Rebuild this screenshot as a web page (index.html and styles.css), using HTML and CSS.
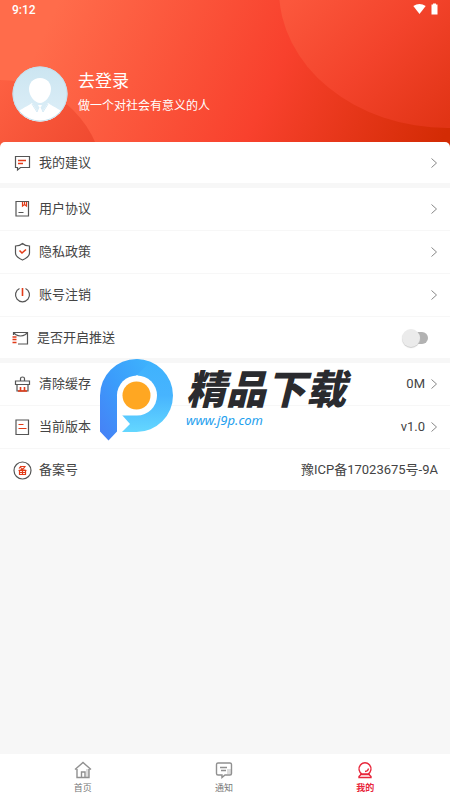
FILE: index.html
```html
<!DOCTYPE html>
<html lang="zh-CN">
<head>
<meta charset="utf-8">
<meta name="viewport" content="width=device-width, initial-scale=1">
<title>我的</title>
<link rel="stylesheet" href="styles.css">
</head>
<body>
<div class="app">
  <header class="hero">
    <svg class="hero-art" viewBox="0 0 450 147" preserveAspectRatio="none" aria-hidden="true">
      <defs>
        <linearGradient id="base" gradientUnits="userSpaceOnUse" x1="50" y1="20" x2="420" y2="190">
          <stop offset="0" stop-color="#ff6c4b"/><stop offset=".56" stop-color="#f8412d"/><stop offset="1" stop-color="#d32b04"/>
        </linearGradient>
        <linearGradient id="big" gradientUnits="userSpaceOnUse" x1="290" y1="0" x2="430" y2="140">
          <stop offset="0" stop-color="#fb573c"/><stop offset=".5" stop-color="#f3432b"/><stop offset="1" stop-color="#e13415"/>
        </linearGradient>
        <linearGradient id="small" gradientUnits="userSpaceOnUse" x1="0" y1="80" x2="90" y2="147">
          <stop offset="0" stop-color="#fd6042"/><stop offset="1" stop-color="#f04a30"/>
        </linearGradient>
      </defs>
      <path d="M0 0h450v147H0z" fill="url(#base)"/>
      <ellipse cx="448" cy="-10" rx="169" ry="138" fill="url(#big)"/>
      <circle cx="0" cy="184" r="104" fill="url(#small)"/>
    </svg>
    <div class="status">
      <span class="time">9:12</span>
      <span class="status-icons">
        <svg width="13" height="12" viewBox="0 0 13 12"><path d="M0.300 3Q6.500-1 12.700 3L6.500 11z" fill="#fff"/></svg>
        <svg width="7" height="12" viewBox="0 0 7 12"><path d="M2 0.500h3V1.500h1.500V11.500H.5V1.500H2z" fill="#fff"/></svg>
      </span>
    </div>
    <div class="profile">
      <svg class="avatar" viewBox="0 0 56 56" aria-hidden="true">
        <defs><clipPath id="face"><circle cx="28" cy="28" r="27.500"/></clipPath>
        <linearGradient id="sky" x1="0" y1="0" x2="0" y2="1"><stop offset="0" stop-color="#cbe5f1"/><stop offset="1" stop-color="#deeff8"/></linearGradient></defs>
        <g clip-path="url(#face)">
          <path d="M0 0h56v56H0z" fill="url(#sky)"/>
          <path d="M28 12c7 0 11 5 11 11 0 7-6 14-11 14s-11-7-11-14c0-6 4-11 11-11z" fill="#fff"/>
          <path d="M4 56V48c2-4 9-6 16-11l5 8 2-4-1-2h4l-1 2 2 4 5-8c7 5 14 7 16 11v8z" fill="#fff"/>
          <path d="M20 38l5 8 2-5M36 38l-5 8-2-5" fill="none" stroke="#d5eaf5" stroke-width="1"/>
        </g>
        <circle cx="28" cy="28" r="27" fill="none" stroke="#c3e0ee" stroke-width="1"/>
      </svg>
      <div>
        <a class="login" href="#">去登录</a>
        <p class="motto">做一个对社会有意义的人</p>
      </div>
    </div>
  </header>

  <main class="list">
    <section class="group">
      <a class="row" href="#">
        <svg class="icon" viewBox="0 0 20 20"><path d="M3.500 3.500h14v11h-9l-3 2.500v-2.500h-2z"/><path class="red" d="M6 7.500h8M6 10.500h5"/></svg>
        <span class="label">我的建议</span><svg class="arrow" viewBox="0 0 8 12"><path d="M1.500 1.500L6.500 6l-5 4.500"/></svg>
      </a>
    </section>
    <section class="group">
      <a class="row" href="#">
        <svg class="icon" viewBox="0 0 20 20"><path d="M4 2.500h12.500v14.500H4zM6.500 13.500h5"/><path class="red thin" d="M10.500 3v4l2-1.500 2 1.500V3M12.500 3v3"/></svg>
        <span class="label">用户协议</span><svg class="arrow" viewBox="0 0 8 12"><path d="M1.500 1.500L6.500 6l-5 4.500"/></svg>
      </a>
      <a class="row" href="#">
        <svg class="icon" viewBox="0 0 20 20"><path d="M10.500 1.500Q13 4 17.500 4v7q0 4-7 7-7-3-7-7V4Q8 4 10.500 1.500z"/><path class="red" d="M7.500 8.500l2.500 2.500 4-3.500"/></svg>
        <span class="label">隐私政策</span><svg class="arrow" viewBox="0 0 8 12"><path d="M1.500 1.500L6.500 6l-5 4.500"/></svg>
      </a>
      <a class="row" href="#">
        <svg class="icon" viewBox="0 0 20 20"><path d="M7.500 3.500a7 7 0 1 0 6 0"/><path class="red" d="M10.500 3v8"/></svg>
        <span class="label">账号注销</span><svg class="arrow" viewBox="0 0 8 12"><path d="M1.500 1.500L6.500 6l-5 4.500"/></svg>
      </a>
      <label class="row row-push">
        <svg class="icon" viewBox="0 0 20 20"><path d="M3.500 7V4.500h14v11.500H8M3.500 4.500l2 2q5 3 10 0l2-2"/><path class="red" d="M2.500 9h4M2.500 11.500h4M2.500 14.500h4"/></svg>
        <span class="label">是否开启推送</span><input class="switch" type="checkbox">
      </label>
    </section>
    <section class="group">
      <a class="row" href="#">
        <svg class="icon" viewBox="0 0 20 20"><path d="M8.500 7V4.500q0-1.500 2-1.500t2 1.500V7M3.500 7h14v3.500h-14zM5 10.500V17h11v-6.500"/><path class="red" d="M8.500 13v4M12.500 13v4M6 17h9"/></svg>
        <span class="label">清除缓存</span><span class="value">0M</span><svg class="arrow" viewBox="0 0 8 12"><path d="M1.500 1.500L6.500 6l-5 4.500"/></svg>
      </a>
      <a class="row" href="#">
        <svg class="icon" viewBox="0 0 20 20"><path d="M4 3h12.500v14.500H4z"/><path class="red thin" d="M6.500 7.500h5M6.500 11.500h8"/></svg>
        <span class="label">当前版本</span><span class="value">v1.0</span><svg class="arrow" viewBox="0 0 8 12"><path d="M1.500 1.500L6.500 6l-5 4.500"/></svg>
      </a>
      <div class="row">
        <svg class="icon" viewBox="0 0 20 20"><circle cx="10.500" cy="10.500" r="8.500"/><path class="red thin" d="M9 6l-2 2.500M8.500 6.500h4.500q-2 3.500-6.500 4M8.500 7.500q2 2.500 6 3M7.500 10.500h6v4h-6zM7.500 12.500h6M10.500 10.500v4"/></svg>
        <span class="label">备案号</span><span class="value">豫ICP备17023675号-9A</span>
      </div>
    </section>
  </main>

  <nav class="tabs">
    <a class="tab" href="#"><svg class="tab-icon" viewBox="0 0 20 20"><path class="shade" d="M13 9h3v8h-3z"/><path d="M2 9.500L10 2.500l8 7M4 9v8.500h12V9M8.500 17.500V12h3.500v5.500"/></svg>首页</a>
    <a class="tab" href="#"><svg class="tab-icon" viewBox="0 0 20 20"><path class="shade" d="M13 9h4v5h-4z"/><path d="M4 3h12q1.500 0 1.500 1.500v9q0 1.500-1.500 1.500h-5l-3 2.500V15H4q-1.500 0-1.500-1.500v-9Q2.500 3 4 3zM6 7.500h7M7 10.500h5"/></svg>通知</a>
    <a class="tab active" href="#"><svg class="tab-icon" viewBox="0 0 20 20"><path d="M7 14a6 6 0 1 1 6 0zM5 14.500h10M4 17.500h12v-1l-2-2H6l-2 2zM10 11.500q3 0 3.500-3"/></svg>我的</a>
  </nav>

  <div class="watermark">
    <svg class="mark" viewBox="0 0 74 82" aria-hidden="true">
      <defs>
        <linearGradient id="stem" x1="0" y1="1" x2="1" y2="0"><stop offset="0" stop-color="#477ff5"/><stop offset=".5" stop-color="#3b9cfb"/><stop offset="1" stop-color="#3eb4fd"/></linearGradient>
        <linearGradient id="bowl" x1="0" y1="0" x2="0" y2="1"><stop offset="0" stop-color="#3eb2fd"/><stop offset=".5" stop-color="#47b4fe"/><stop offset="1" stop-color="#64d7ff"/></linearGradient>
      </defs>
      <path d="M36.500 0a36.500 36.500 0 0 1 0 73H22l8-8-8-9h15L57 36 37 16z" fill="url(#bowl)"/>
      <path d="M0 36.500A36.500 36.500 0 0 1 36.500 0L50 3 37 16 17 36V72.500L8.500 81.500 0 72.500z" fill="url(#stem)"/>
      <path d="M17 36.500a20 20 0 1 1 20 20H17z" fill="#fff"/>
      <circle cx="36.500" cy="36.500" r="14" fill="#ffa722"/>
    </svg>
    <div class="brand"><strong class="brand-name">精品下载</strong><span class="brand-url">www.j9p.com</span></div>
  </div>
</div>
</body>
</html>
```
FILE: styles.css
```css
* { box-sizing: border-box; }
body {
  margin: 0;
  background: #f7f7f7;
  color: #444;
  font-family: Roboto, "Noto Sans CJK SC", sans-serif;
  font-size: 13px;
  line-height: 20px;
}
a { color: inherit; text-decoration: none; }
.app { position: relative; min-height: 100vh; display: flex; flex-direction: column; }

.hero { position: relative; padding-bottom: 25px; color: #fff; }
.hero-art { position: absolute; inset: 0; width: 100%; height: 100%; }
.status { position: relative; display: flex; justify-content: space-between; align-items: center; height: 20px; padding: 0 12px; }
.time { font-size: 12px; font-weight: 500; }
.status-icons { display: flex; gap: 5px; align-items: center; height: 20px; padding-bottom: 2px; }
.status-icons svg { display: block; }
.profile { position: relative; display: flex; align-items: center; gap: 10px; padding: 46px 12px 0; }
.avatar { width: 56px; height: 56px; }
.login { display: block; font-size: 17px; line-height: 26px; }
.motto { margin: 2px 0 4px; font-size: 12px; line-height: 20px; }

.list { position: relative; flex: 1; display: flex; flex-direction: column; gap: 5px; margin-top: -5px; }
.group { background: #fff; }
.group:first-child { border-radius: 5px 5px 0 0; }
.row { display: flex; align-items: center; height: 43px; padding: 0 12px; border-bottom: 1px solid #f7f7f7; }
.row:last-child { height: 41px; border-bottom: 0; }
.icon { width: 20px; height: 20px; margin-right: 7px; fill: none; stroke: #555; stroke-width: 1.2; }
.row-push .icon { margin-left: -2px; }
.icon .red { stroke: #e23b18; stroke-width: 1.6; }
.icon .thin { stroke-width: 1.2; }
.label { flex: 1; }
.arrow { width: 8px; height: 12px; margin-left: 5px; fill: none; stroke: #888; stroke-width: 1; }
.switch {
  appearance: none;
  position: relative;
  width: 24px;
  height: 12px;
  margin: 0 10px 0 0;
  border-radius: 6px;
  background: #b2b2b2;
}
.switch::before {
  content: "";
  position: absolute;
  left: -2px;
  top: -3px;
  width: 18px;
  height: 18px;
  border-radius: 50%;
  background: #ebebeb;
  box-shadow: 0 1px 1px #ccc;
}

.tabs { display: flex; height: 46px; padding: 0 14px 0 12px; background: #fff; }
.tab { flex: 1; display: flex; flex-direction: column; align-items: center; padding-top: 6px; color: #777; font-size: 9px; line-height: 14px; gap: 1px; }
.tab-icon { width: 20px; height: 20px; fill: none; stroke: #909090; stroke-width: 1.4; }
.tab-icon .shade { fill: #ddd; stroke: none; }
.active { color: #e8273b; font-weight: 700; }
.active .tab-icon { stroke: #e8273b; }

.watermark { position: absolute; left: 100px; top: 359px; display: flex; gap: 12px; pointer-events: none; }
.mark { width: 74px; height: 82px; }
.brand { display: flex; flex-direction: column; padding-top: 10px; font-style: italic; }
.brand-name { color: #2a2b2f; font-size: 40px; font-weight: 900; line-height: 44px; }
.brand-url { color: #1ea0ee; font-family: "Noto Sans", "Open Sans", sans-serif; font-size: 13px; line-height: 14px; }
```
